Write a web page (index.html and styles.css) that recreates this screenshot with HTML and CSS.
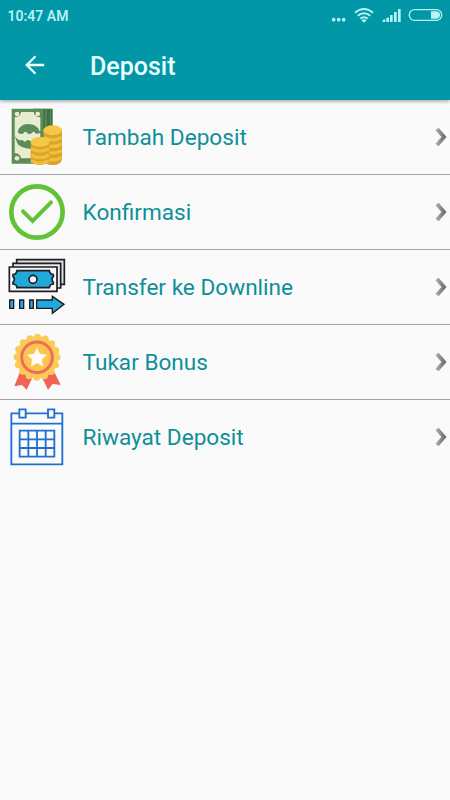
FILE: index.html
```html
<!DOCTYPE html>
<html lang="id">
<head>
<meta charset="utf-8">
<title>Deposit</title>
<link rel="stylesheet" href="styles.css">
</head>
<body>
<header class="header">
  <div class="status">
    <span class="time">10:47 AM</span>
    <svg class="indicators" viewBox="0 0 390 96" fill="#b5f3f6">
      <circle cx="41" cy="59" r="5.5"/><circle cx="56" cy="59" r="5.5"/><circle cx="71" cy="59" r="5.5"/>
      <g fill="none" stroke="#b5f3f6" stroke-width="6">
        <path d="M105 38Q132 16 159 38M113 47.500Q132 32 151 47.500M121 56Q132 48 143 56"/>
        <rect x="268" y="29" width="97" height="32" rx="15" stroke-width="4"/>
      </g>
      <path d="M124 61Q132 55 140 61L132 68Z"/>
      <path d="M188 60l8-2v8h-8zM199 53h8v13h-8zM210 45h8v21h-8zM222 36h8v30h-8zM234 27h8v39h-8z"/>
      <path d="M333 34h18q9 2 9 11t-9 11h-18z"/>
    </svg>
  </div>
  <div class="toolbar">
    <svg class="back" viewBox="0 0 24 24" fill="none" stroke="#eaffff" stroke-width="2.5"><path d="M22 12H3M12.500 2.500 3 12l9.500 9.500"/></svg>
    <h1 class="title">Deposit</h1>
  </div>
</header>
<main class="menu">
  <svg class="defs" width="0" height="0">
    <linearGradient id="shade" x1="0" y1="0" x2="1" y2="0"><stop offset="0" stop-color="#a8a8a8"/><stop offset="1" stop-color="#747474"/></linearGradient>
  </svg>
  <a class="row">
    <svg class="icon" viewBox="0 0 225 225">
      <path fill="#3c703f" d="M100 26h58v165h-58z"/><path fill="#568358" d="M134 26h7v165h-7zM149 26h4v165h-4z"/>
      <path fill="#5c8c59" d="M35 26h95v165H35z"/>
      <path fill="#e9edcf" d="M63 36h38q1 14 20 16v123H63q-1-14-19-16V52q18-1 19-16z"/>
      <g fill="#e9edcf"><circle cx="51" cy="42" r="7"/><circle cx="113" cy="42" r="7"/><circle cx="51" cy="175" r="7"/></g>
      <path fill="#5c8c59" d="M53 96Q58 73 84 72q27 0 34 20l12 6v12l-10-12q-5 4-13 3-2-7-8-6-5 9-15 6-5-7-10-6-4 9-12 7-6-1-9-6zM44 108l8 9q8 5 16 3 3 5 8 5 5-8 11-4 7 5 12 1l20-4v28H90Q65 145 53 132z"/>
      <path fill="#d8a529" d="M130 91v88q3 15 28 16 25-1 28-16V91z"/>
      <path fill="none" stroke="#f0bf3d" stroke-width="10" d="M131 112q27 15 54 0M131 132q27 15 54 0M131 152q27 15 54 0M131 172q27 15 54 0"/>
      <ellipse cx="158" cy="91" rx="28" ry="15" fill="#f6c646"/>
      <path fill="#d8a529" d="M92 126v54q3 14 28 15 25-1 28-15v-54z"/>
      <path fill="none" stroke="#f0bf3d" stroke-width="10" d="M93 146q27 15 54 0M93 165q27 15 54 0M93 182q27 15 54 0"/>
      <ellipse cx="120" cy="126" rx="28" ry="15" fill="#f6c646"/>
    </svg>
    <span class="label">Tambah Deposit</span>
    <svg class="chevron" viewBox="0 0 42 66"><path d="M9 9 30 33 9 57"/></svg>
  </a>
  <a class="row">
    <svg class="icon" viewBox="0 0 225 225" fill="none" stroke="#60c234">
      <circle cx="111" cy="111" r="77" stroke-width="14"/>
      <path d="M69 109l29 29 55-56" stroke-width="12" stroke-linecap="round"/>
    </svg>
    <span class="label">Konfirmasi</span>
    <svg class="chevron" viewBox="0 0 42 66"><path d="M9 9 30 33 9 57"/></svg>
  </a>
  <a class="row">
    <svg class="icon" viewBox="0 0 225 225" stroke="#1d1d22" stroke-width="5">
      <path fill="#dedee3" d="M50 29h143v74H50z"/><path fill="#e9e9ed" d="M39 40h143v74H39z"/><path fill="#f6f6f7" d="M28 51h143v73H28z"/>
      <path fill="#21a9dc" d="M51 62h97q1 11 12 12v5q-8 9 0 18v5q-11 1-12 11H51q-1-10-12-11v-5q8-9 0-18v-5q11-1 12-12z"/>
      <circle cx="99" cy="88" r="12" fill="#eef6fa"/>
      <g fill="#21a9dc" stroke-width="4"><path d="M29 150h12v25H29zM59 150h12v25H59zM89 150h11v25H89zM110 150h47v-11l35 24-35 27v-15h-47z"/></g>
    </svg>
    <span class="label">Transfer ke Downline</span>
    <svg class="chevron" viewBox="0 0 42 66"><path d="M9 9 30 33 9 57"/></svg>
  </a>
  <a class="row">
    <svg class="icon" viewBox="0 0 225 225">
      <path fill="#f06455" d="M61 137l-18 47 23-4 14 14 24-51zM161 137l21 43-24-3-14 17-25-51z"/>
      <circle cx="111" cy="97" r="63" fill="#fbcb57"/>
      <circle cx="111" cy="97" r="60" fill="none" stroke="#fbcb57" stroke-width="21" stroke-linecap="round" stroke-dasharray="0 23.562"/>
      <circle cx="111" cy="97" r="46" fill="#fbc550" stroke="#f16d55" stroke-width="9"/>
      <path fill="#fffdf5" d="M111 68l9 18 21 3-15 14 3 22-18-11-18 11 3-22-15-14 21-3z"/>
    </svg>
    <span class="label">Tukar Bonus</span>
    <svg class="chevron" viewBox="0 0 42 66"><path d="M9 9 30 33 9 57"/></svg>
  </a>
  <a class="row">
    <svg class="icon" viewBox="0 0 225 225" fill="none" stroke="#1f70d0" stroke-width="5.500">
      <path d="M34 40h153v153H34zM34 71h153M59 92h104v78H59zM85 92v78M111 92v78M137 92v78M59 118h104M59 144h104"/>
      <path fill="#fafafa" d="M58 28h19v25H58zM144 28h19v25h-19z"/>
    </svg>
    <span class="label">Riwayat Deposit</span>
    <svg class="chevron" viewBox="0 0 42 66"><path d="M9 9 30 33 9 57"/></svg>
  </a>
</main>
</body>
</html>
```
FILE: styles.css
```css
* { box-sizing: border-box; }
body {
  margin: 0;
  min-height: 800px;
  background: #fafafa;
  font-family: Roboto, "Liberation Sans", sans-serif;
}
.header {
  height: 100px;
  background: #0297a7;
  box-shadow: 0 1px 4px rgba(0, 0, 0, 0.4);
}
.status {
  height: 32px;
  display: flex;
  align-items: center;
  justify-content: space-between;
  padding-left: 7.5px;
}
.time { font-size: 14px; font-weight: 600; color: #b5f3f6; }
.indicators { width: 130px; height: 32px; }
.toolbar {
  height: 67px;
  display: flex;
  align-items: center;
  padding-left: 24px;
}
.back { width: 22px; height: 22px; margin-top: -1px; }
.title {
  margin: 2px 0 0 44px;
  font-size: 25px;
  font-weight: 500;
  color: #eaffff;
}
.defs { display: block; }
.row {
  height: 75px;
  display: flex;
  align-items: center;
  border-bottom: 1px solid #a4a4a4;
}
.row:last-child { border-bottom-color: transparent; }
.icon { width: 75px; height: 75px; flex: none; align-self: flex-start; }
.label {
  flex: 1;
  margin: 1px 0 0 7.5px;
  font-size: 22.6px;
  line-height: 30px;
  color: #0e8f99;
}
.chevron {
  width: 14px;
  height: 22px;
  margin-right: 2px;
  fill: none;
  stroke: url(#shade);
  stroke-width: 12;
}
```
